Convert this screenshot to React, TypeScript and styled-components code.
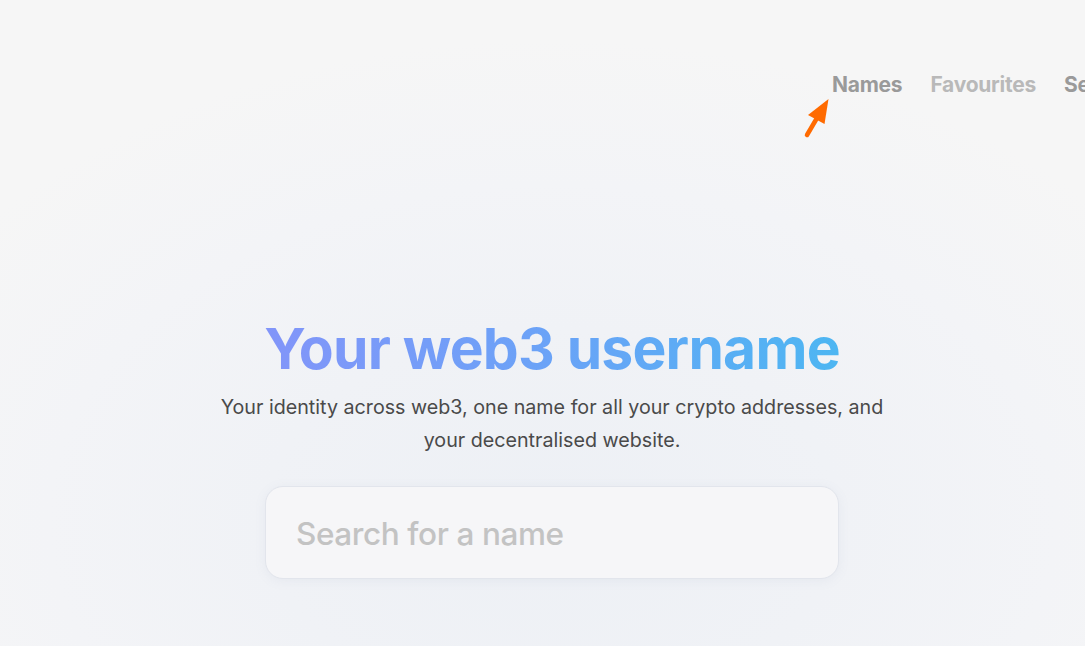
import React from 'react';
import styled, { createGlobalStyle } from 'styled-components';

const GlobalStyle = createGlobalStyle`
  html, body {
    margin: 0;
    padding: 0;
    overflow: hidden;
  }
  body {
    font-family: Inter, "Noto Sans", "Liberation Sans", sans-serif;
    background: #f5f6f8;
  }
`;

const Page = styled.div`
  position: relative;
  width: 1104px;
  height: 646px;
  overflow: hidden;
  background: radial-gradient(
    ellipse 720px 480px at 552px 520px,
    #edf0f5 0%,
    #f0f2f6 40%,
    #f3f4f7 70%,
    #f6f6f6 100%
  );
`;

const Header = styled.header`
  display: flex;
  justify-content: flex-start;
  padding: 73px 0 0 832px;
  height: 28px;
`;

const Nav = styled.nav`
  display: flex;
  gap: 28px;
  white-space: nowrap;
`;

const NavLink = styled.a<{ $active?: boolean }>`
  font-size: 21px;
  font-weight: 700;
  letter-spacing: -0.25px;
  line-height: 24px;
  color: ${(p) => (p.$active ? '#9a9a9a' : '#b9b9b9')};
  text-decoration: none;
  cursor: pointer;
`;

const Hero = styled.main`
  display: flex;
  flex-direction: column;
  align-items: center;
  padding-top: 213px;
`;

const Title = styled.h1`
  margin: 0;
  font-size: 57px;
  font-weight: 700;
  letter-spacing: -0.8px;
  line-height: 70px;
  background: linear-gradient(90deg, #8295f9 0%, #6aa3f7 50%, #4db6f2 100%);
  -webkit-background-clip: text;
  background-clip: text;
  color: transparent;
`;

const Subtitle = styled.p`
  margin: 7px 0 0;
  max-width: 700px;
  text-align: center;
  font-size: 19.7px;
  line-height: 33px;
  font-weight: 400;
  color: #4a4a4a;
`;

const SearchBox = styled.div`
  margin-top: 29px;
  box-sizing: border-box;
  width: 574px;
  height: 93px;
  display: flex;
  align-items: center;
  padding: 2px 28px 0;
  background: #f6f6f8;
  border: 1px solid #e2e5ec;
  border-radius: 18px;
  box-shadow: 0 2px 12px rgba(120, 130, 160, 0.08);
`;

const SearchInput = styled.input`
  flex: 1;
  border: none;
  outline: none;
  background: transparent;
  font-family: inherit;
  font-size: 31.5px;
  font-weight: 500;
  letter-spacing: -0.4px;
  color: #333;
  &::placeholder {
    color: #c3c3c3;
  }
`;

const Pointer = styled.svg`
  position: absolute;
  left: 800px;
  top: 95px;
`;

export default function App() {
  return (
    <>
      <GlobalStyle />
      <Page>
        <Header>
          <Nav>
            <NavLink $active>Names</NavLink>
            <NavLink>Favourites</NavLink>
            <NavLink $active>Settings</NavLink>
          </Nav>
        </Header>
        <Pointer width="40" height="46" viewBox="0 0 40 46">
          <line x1="7" y1="40" x2="17" y2="23" stroke="#ff6a00" strokeWidth="4.5" strokeLinecap="round" />
          <polygon points="28.5,4 8,20 24.5,29" fill="#ff6a00" />
        </Pointer>
        <Hero>
          <Title>Your web3 username</Title>
          <Subtitle>
            Your identity across web3, one name for all your crypto addresses, and your decentralised website.
          </Subtitle>
          <SearchBox>
            <SearchInput placeholder="Search for a name" />
          </SearchBox>
        </Hero>
      </Page>
    </>
  );
}
